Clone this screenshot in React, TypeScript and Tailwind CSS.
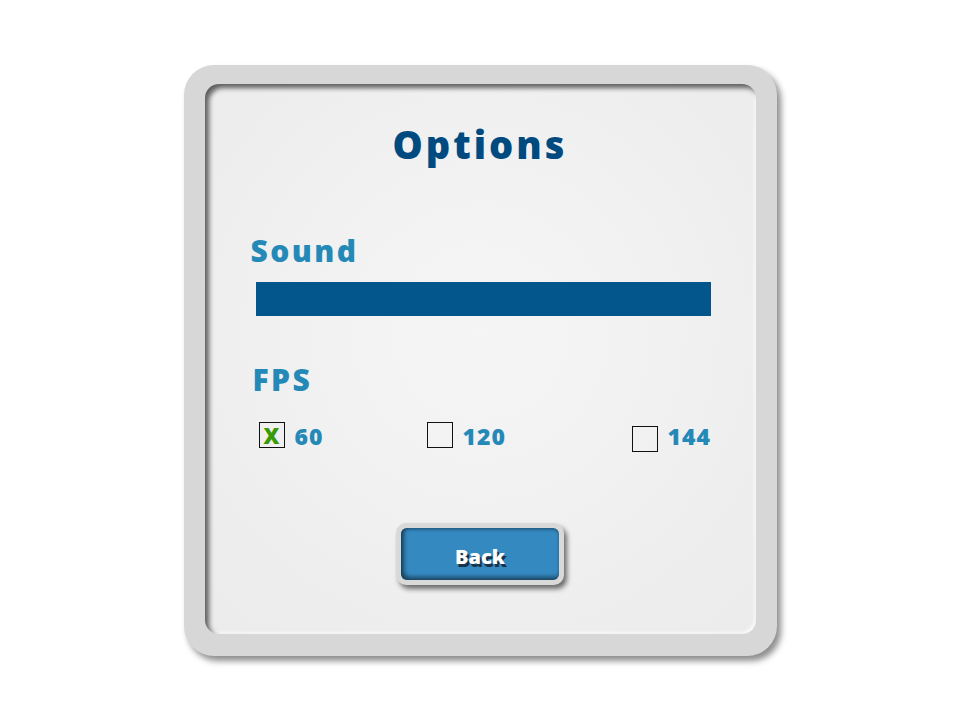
import React from 'react';

const font = { fontFamily: '"Open Sans", "DejaVu Sans", sans-serif' };

const FpsOption: React.FC<{ label: string; checked?: boolean; low?: boolean }> = ({ label, checked, low }) => (
  <div className="flex items-start gap-[10px]">
    <div
      className={`w-[26px] h-[26px] border border-[#111] flex items-center justify-center ${low ? 'mt-[4px]' : ''}`}
    >
      {checked && (
        <span className="text-[22px] leading-none font-extrabold text-[#3a9a06]" style={font}>
          X
        </span>
      )}
    </div>
    <span className="text-[23px] leading-[28px] font-extrabold text-[#2589b8] tracking-[1px]" style={font}>
      {label}
    </span>
  </div>
);

export default function App() {
  return (
    <div className="w-full h-[720px] bg-white flex items-center justify-center" style={font}>
      <div className="w-[593px] h-[591px] rounded-[30px] bg-[#d7d7d7] pt-[19px] pl-[21px] pr-[21px] pb-[22px] shadow-[4px_5px_6px_rgba(0,0,0,0.45)]">
        <div className="h-full rounded-[14px] bg-[radial-gradient(circle_at_50%_45%,#f5f5f5_0%,#f1f1f1_45%,#ebebeb_100%)] shadow-[inset_4px_4px_5px_rgba(0,0,0,0.6),inset_-2px_-2px_3px_rgba(255,255,255,0.7)] flex flex-col">
          {/* title */}
          <h1 className="pt-[40px] text-center text-[38px] leading-[40px] font-extrabold text-[#004a80] tracking-[3px]">
            Options
          </h1>

          {/* sound */}
          <h2 className="mt-[71px] ml-[46px] text-[30px] leading-[32px] font-extrabold text-[#2589b8] tracking-[2.4px]">
            Sound
          </h2>
          <div className="mt-[15px] ml-[51px] w-[455px] h-[34px] bg-[#02568c]" />

          {/* fps */}
          <h2 className="mt-[48px] ml-[48px] text-[30px] leading-[32px] font-extrabold text-[#2589b8] tracking-[2.4px]">
            FPS
          </h2>
          <div className="mt-[26px] ml-[54px] flex">
            <div className="w-[168px]">
              <FpsOption label="60" checked />
            </div>
            <div className="w-[205px]">
              <FpsOption label="120" />
            </div>
            <FpsOption label="144" low />
          </div>

          {/* back */}
          <div className="mt-[71px] flex justify-center">
            <div className="w-[168px] h-[62px] rounded-[10px] bg-[#d9d9d9] p-[5px] shadow-[3px_4px_5px_rgba(0,0,0,0.55)]">
              <button className="w-full h-full rounded-[6px] bg-[#3589c1] shadow-[inset_3px_-3px_4px_rgba(0,0,0,0.5),inset_0_2px_3px_rgba(0,0,0,0.3)] flex items-center justify-center">
                <span className="mt-[6px] text-[20px] font-extrabold text-white [text-shadow:2px_3px_0_#18324a]" style={font}>
                  Back
                </span>
              </button>
            </div>
          </div>
        </div>
      </div>
    </div>
  );
}
